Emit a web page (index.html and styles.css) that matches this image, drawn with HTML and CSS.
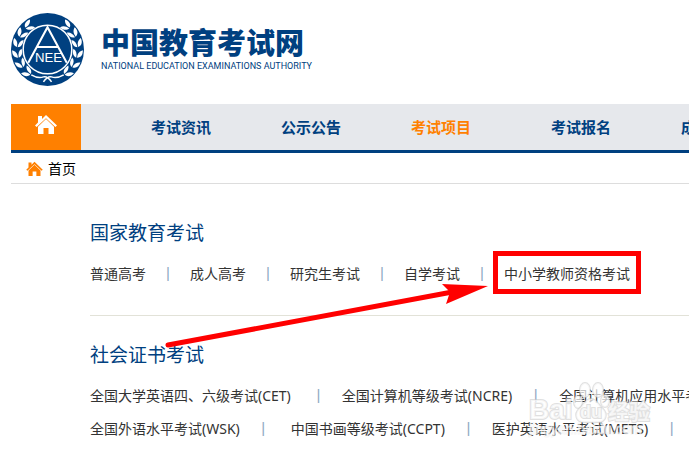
FILE: index.html
```
<!DOCTYPE html>
<html lang="zh-CN">
<head>
  <meta charset="UTF-8" />
  <title>中国教育考试网</title>
  <link rel="stylesheet" href="styles.css">
</head>
<body>
  <svg class="defs" width="0" height="0" aria-hidden="true">
    <symbol id="house" viewBox="0 0 22 20">
      <path d="M0 11.500 3 8.600V2h4v3L11 1l11 10.500-1.600 1.500L11 4.200 1.600 13z" />
      <path d="M3 12.800 11 5l8 7.800V20h-5.500v-6h-5v6H3z" />
    </symbol>
    <symbol id="leaves" viewBox="-5 -5 10 10" overflow="visible">
      <path d="M0 4C-4 3.500-5.400 0-4.600-4-1.600-2.600.2-.4 0 4z" />
      <path d="M.8 4C.6-.4 1.800-3 4.800-4.400 5.400-.4 4.200 3 .8 4z" />
    </symbol>
  </svg>

  <div class="container">
    <!-- Logo -->
    <div class="header">
      <svg class="emblem" viewBox="0 0 72 72" aria-hidden="true">
        <circle class="navy" cx="36" cy="36" r="36" />
        <g id="branch" class="white">
          <use href="#leaves" x="-5" y="-5" width="10" height="10" transform="rotate(-38 36 36) translate(36 6) rotate(98)" />
          <use href="#leaves" x="-5" y="-5" width="10" height="10" transform="rotate(-58 36 36) translate(36 6) rotate(94)" />
          <use href="#leaves" x="-5" y="-5" width="10" height="10" transform="rotate(-78 36 36) translate(36 6) rotate(92)" />
          <use href="#leaves" x="-5" y="-5" width="10" height="10" transform="rotate(-98 36 36) translate(36 6) rotate(90)" />
          <use href="#leaves" x="-5" y="-5" width="10" height="10" transform="rotate(-118 36 36) translate(36 6) rotate(88)" />
          <use href="#leaves" x="-5" y="-5" width="10" height="10" transform="rotate(-138 36 36) translate(36 6) rotate(86)" />
          <path class="line" d="M20 61q7 4 12 2 4-1 8 5" />
        </g>
        <use href="#branch" transform="translate(72 0) scale(-1 1)" />
        <circle class="line" cx="36" cy="36" r="24" />
        <path class="line thick" d="M17 49 36 14l19 35M26 33.500h20" />
        <text x="37" y="48" text-anchor="middle">NEE</text>
      </svg>
      <div class="brand">
        <h1>中国教育考试网</h1>
        <p>NATIONAL EDUCATION EXAMINATIONS AUTHORITY</p>
      </div>
    </div>

    <!-- Navigation -->
    <nav class="bar">
      <a class="home" href="#" aria-label="首页"><svg><use href="#house" /></svg></a>
      <a href="#">考试资讯</a>
      <a href="#">公示公告</a>
      <a class="active" href="#">考试项目</a>
      <a href="#">考试报名</a>
      <a href="#">成绩查询</a>
    </nav>

    <div class="crumb">
      <svg><use href="#house" /></svg>
      <a href="#">首页</a>
    </div>

    <!-- Exam list -->
    <main class="exams">
      <section class="group">
        <h2>国家教育考试</h2>
        <div class="row">
          <a href="#">普通高考</a><span class="sep">|</span>
          <a href="#">成人高考</a><span class="sep">|</span>
          <a href="#">研究生考试</a><span class="sep">|</span>
          <a href="#">自学考试</a><span class="sep">|</span>
          <a class="marked" href="#">中小学教师资格考试<svg class="arrow" viewBox="0 0 326 66" aria-hidden="true">
            <path class="shaft" d="M5 62 300 7" />
            <path d="M279 1 325 3 283 21 287 9z" />
          </svg></a>
        </div>
      </section>
      <section class="group social">
        <h2>社会证书考试</h2>
        <div class="row">
          <a href="#">全国大学英语四、六级考试(CET)</a><span class="sep wide-left">|</span>
          <a href="#">全国计算机等级考试(NCRE)</a><span class="sep">|</span>
          <a href="#">全国计算机应用水平考试(NIT)</a>
        </div>
        <div class="row">
          <a href="#">全国外语水平考试(WSK)</a><span class="sep wide-right">|</span>
          <a href="#">中国书画等级考试(CCPT)</a><span class="sep">|</span>
          <a href="#">医护英语水平考试(METS)</a><span class="sep">|</span>
        </div>
      </section>

      <svg class="watermark" viewBox="0 0 126 62" aria-hidden="true">
        <g class="paw">
          <ellipse cx="50" cy="21" rx="4" ry="6" />
          <ellipse cx="57" cy="9" rx="5" ry="7" />
          <ellipse cx="70" cy="9" rx="5" ry="7" />
          <ellipse cx="77" cy="20" rx="4" ry="6" />
          <path d="M63 18c6 0 7 6 12 10 5 5 3 13-5 13H56c-8 0-10-8-5-13 5-4 6-10 12-10z" />
        </g>
        <text class="name" x="1" y="38">Bai</text>
        <text class="du" x="63" y="37" text-anchor="middle">du</text>
        <text class="cn" x="80" y="38">经验</text>
        <text class="site" x="1" y="53">jingyan.baidu.com</text>
      </svg>
    </main>
  </div>
</body>
</html>
```

FILE: styles.css
```
body {
  margin: 0;
  background: #fff;
  color: #333;
  font-family: "Noto Sans", "Noto Sans CJK SC", sans-serif;
  font-size: 14px;
}
a {
  color: inherit;
  text-decoration: none;
}
h1, h2, p { margin: 0; }
.defs { position: absolute; }
.container {
  padding-left: 11px;
  overflow: hidden;
}

/* Logo */
.header {
  display: flex;
  align-items: center;
  gap: 17px;
  padding: 13px 0 18px;
  color: #004080;
}
.emblem {
  width: 73px;
  height: 73px;
}
.navy { fill: #004080; }
.white { fill: #fff; }
.line {
  fill: none;
  stroke: #fff;
  stroke-width: 1.5;
}
.thick { stroke-width: 2; }
.emblem text {
  fill: #fff;
  font: 13px "Liberation Sans", sans-serif;
}
.brand h1 {
  font-size: 29px;
  font-weight: 900;
  line-height: 32px;
}
.brand p {
  font: 9px/14px Roboto, sans-serif;
}

/* Navigation */
.bar {
  display: flex;
  gap: 70px;
  height: 46px;
  line-height: 46px;
  background: #e6e8ec;
  border-bottom: 3px solid #004080;
  color: #004080;
  font-size: 15px;
  font-weight: bold;
  white-space: nowrap;
  overflow: hidden;
}
.bar .home {
  display: flex;
  flex: none;
  align-items: center;
  justify-content: center;
  width: 70px;
  background: #ff8000;
}
.home svg {
  width: 22px;
  height: 20px;
  padding-bottom: 6px;
  fill: #fff;
}
.bar .active {
  color: #ff8000;
  margin-right: 10px;
}

.crumb {
  display: flex;
  align-items: center;
  gap: 5px;
  height: 30px;
  padding-left: 15px;
  border-bottom: 1px solid #ddd;
  color: #000;
}
.crumb svg {
  width: 17px;
  height: 15px;
  fill: #ff8000;
}

/* Exam list */
.exams {
  position: relative;
  padding: 10px 0 0 79px;
}
.group {
  padding: 26px 0 25px;
  border-bottom: 1px solid #e2e2d8;
}
.group:last-of-type {
  padding-bottom: 0;
  border-bottom: none;
}
.group h2 {
  margin-bottom: 11px;
  color: #004080;
  font-size: 19px;
  font-weight: normal;
  line-height: 26px;
}
.row {
  display: flex;
  line-height: 33px;
  white-space: nowrap;
}
.row a { flex: none; }
.sep {
  flex: none;
  width: 44px;
  color: #8fa9c4;
  font: 15px/32px "Liberation Sans", sans-serif;
  text-align: center;
}
.social .sep { width: 47px; }
.wide-left { padding-left: 4px; }
.wide-right { padding-right: 4px; }

/* Highlighted link and its pointer */
.marked { position: relative; }
.marked::after {
  content: "";
  position: absolute;
  inset: -6px -11px -4px;
  border: 5px solid #f00;
}
.arrow {
  position: absolute;
  right: 141px;
  top: 26px;
  width: 326px;
  height: 66px;
  fill: #f00;
}
.shaft {
  stroke: #f00;
  stroke-width: 5;
  stroke-linecap: round;
}

.watermark {
  position: absolute;
  left: 517px;
  top: 197px;
  width: 126px;
  height: 62px;
  fill: #fff;
  fill-opacity: 0.7;
  stroke: #ccc;
  stroke-opacity: 0.6;
  stroke-width: 2;
  paint-order: stroke;
}
.name { font: bold 28px "Liberation Sans", sans-serif; }
.du { font: bold 18px "Liberation Sans", sans-serif; }
.cn { font: bold 21px "Noto Sans CJK SC", sans-serif; }
.site {
  font: 14px "Liberation Sans", sans-serif;
  fill-opacity: 0.4;
  stroke: #eee;
  stroke-width: 1;
}
```
